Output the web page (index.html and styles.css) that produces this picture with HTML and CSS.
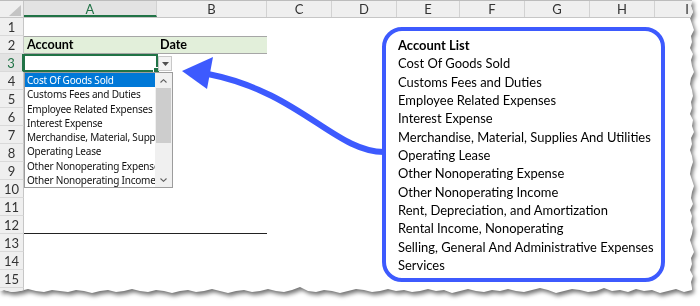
FILE: index.html
```html
<!DOCTYPE html>
<html>
<head>
<meta charset="utf-8">
<link rel="stylesheet" href="styles.css">
</head>
<body>
<div class="frame">
  <div class="sheet">
    <div class="colheads">
      <div class="corner"><svg width="24" height="17" viewBox="0 0 24 17"><polygon points="9,15 21,15 21,4" fill="#c4c4c4"/></svg></div>
      <div class="ch w-a ch-sel">A</div>
      <div class="ch w-b">B</div>
      <div class="ch w-c">C</div>
      <div class="ch w-c">D</div>
      <div class="ch w-e">E</div>
      <div class="ch w-c">F</div>
      <div class="ch w-c">G</div>
      <div class="ch w-c">H</div>
      <div class="ch w-c">I</div>
    </div>
    <div class="row"><div class="rh">1</div></div>
    <div class="row"><div class="rh">2</div><div class="cell w-a band">Account</div><div class="cell w-b band">Date</div></div>
    <div class="row"><div class="rh rh-sel">3</div><div class="cell w-a selcell"><span class="handle"></span></div><div class="cell w-b"><span class="ddbtn"><svg width="7" height="4" viewBox="0 0 7 4"><polygon points="0,0 7,0 3.5,4" fill="#505050"/></svg></span></div></div>
    <div class="row"><div class="rh">4</div></div>
    <div class="row"><div class="rh">5</div></div>
    <div class="row"><div class="rh">6</div></div>
    <div class="row"><div class="rh">7</div></div>
    <div class="row"><div class="rh">8</div></div>
    <div class="row"><div class="rh">9</div></div>
    <div class="row"><div class="rh">10</div></div>
    <div class="row"><div class="rh">11</div></div>
    <div class="row"><div class="rh">12</div><div class="cell w-a under"></div><div class="cell w-b under"></div></div>
    <div class="row"><div class="rh">13</div></div>
    <div class="row"><div class="rh">14</div></div>
    <div class="row"><div class="rh">15</div></div>
    <div class="row"><div class="rh">16</div></div>

    <div class="dropdown">
      <div class="items">
        <div class="item item-sel">Cost Of Goods Sold</div>
        <div class="item">Customs Fees and Duties</div>
        <div class="item">Employee Related Expenses</div>
        <div class="item">Interest Expense</div>
        <div class="item">Merchandise, Material, Supplies And Utilities</div>
        <div class="item">Operating Lease</div>
        <div class="item">Other Nonoperating Expense</div>
        <div class="item">Other Nonoperating Income</div>
      </div>
      <div class="sb">
        <div class="sb-btn"><svg width="7" height="4" viewBox="0 0 7 4"><polyline points="0.5,3.5 3.5,0.7 6.5,3.5" fill="none" stroke="#606060" stroke-width="1.1"/></svg></div>
        <div class="sb-thumb"></div>
        <div class="sb-track"></div>
        <div class="sb-btn"><svg width="7" height="4" viewBox="0 0 7 4"><polyline points="0.5,0.5 3.5,3.3 6.5,0.5" fill="none" stroke="#606060" stroke-width="1.1"/></svg></div>
      </div>
    </div>

    <div class="note">
      <div class="note-title">Account List</div>
      <div>Cost Of Goods Sold</div>
      <div>Customs Fees and Duties</div>
      <div>Employee Related Expenses</div>
      <div>Interest Expense</div>
      <div>Merchandise, Material, Supplies And Utilities</div>
      <div>Operating Lease</div>
      <div>Other Nonoperating Expense</div>
      <div>Other Nonoperating Income</div>
      <div>Rent, Depreciation, and Amortization</div>
      <div>Rental Income, Nonoperating</div>
      <div>Selling, General And Administrative Expenses</div>
      <div>Services</div>
    </div>

    <svg class="arrow" width="700" height="306" viewBox="0 0 700 306">
      <path d="M 384 152 C 335 152, 300 92, 208 74" fill="none" stroke="#3d5afe" stroke-width="6"/>
      <polygon points="182,71 213,57 207,89" fill="#3d5afe"/>
    </svg>
  </div>
</div>
</body>
</html>
```
FILE: styles.css
```css
html, body {
  margin: 0;
  padding: 0;
  background: #ffffff;
}
body {
  width: 700px;
  height: 306px;
  overflow: hidden;
  font-family: "Lato", "Liberation Sans", sans-serif;
}
.frame {
  width: 700px;
  height: 306px;
  filter: drop-shadow(2px 3px 2px rgba(0, 0, 0, 0.55));
}
.sheet {
  position: relative;
  width: 700px;
  height: 306px;
  background: #ffffff;
  clip-path: polygon(0 0, 692px 0, 691px 6px, 693px 12px, 690px 18px, 692px 24px, 694px 30px, 691px 36px, 692px 42px, 690px 48px, 693px 54px, 691px 60px, 692px 66px, 694px 72px, 691px 78px, 690px 84px, 692px 90px, 693px 96px, 691px 102px, 692px 108px, 690px 114px, 693px 120px, 692px 126px, 694px 132px, 691px 138px, 692px 144px, 690px 150px, 692px 156px, 693px 162px, 691px 168px, 690px 174px, 692px 180px, 694px 186px, 692px 192px, 691px 198px, 693px 204px, 690px 210px, 692px 216px, 691px 222px, 693px 228px, 692px 234px, 690px 240px, 692px 246px, 694px 252px, 691px 258px, 692px 264px, 690px 270px, 693px 276px, 691px 282px, 692px 288px,
    692px 290px, 684px 292px, 676px 289px, 668px 291px, 660px 293px, 652px 290px, 644px 291px, 636px 289px, 628px 292px, 620px 290px, 612px 291px, 604px 288px, 596px 291px, 588px 292px, 580px 290px, 572px 289px, 564px 291px, 556px 293px, 548px 290px, 540px 288px, 532px 290px, 524px 292px, 516px 291px, 508px 289px, 500px 291px, 492px 290px, 484px 292px, 476px 291px, 468px 289px, 460px 291px, 452px 293px, 444px 290px, 436px 291px, 428px 289px, 420px 291px, 412px 292px, 404px 290px, 396px 291px, 388px 289px, 380px 291px, 372px 292px, 364px 290px, 356px 289px, 348px 291px, 340px 293px, 332px 291px, 324px 290px, 316px 292px, 308px 291px, 300px 287px, 292px 290px, 284px 292px, 276px 291px, 268px 289px, 260px 291px, 252px 292px, 244px 290px, 236px 291px, 228px 293px, 220px 291px, 212px 289px, 204px 291px, 196px 292px, 188px 290px, 180px 291px, 172px 293px, 164px 291px, 156px 290px, 148px 292px, 140px 291px, 132px 289px, 124px 291px, 116px 292px, 108px 290px, 100px 291px, 92px 293px, 84px 291px, 76px 290px, 68px 292px, 60px 291px, 52px 290px, 44px 292px, 36px 291px, 28px 289px, 20px 291px, 12px 292px, 4px 290px, 0 291px);
}

/* column headers */
.colheads {
  display: flex;
  height: 18px;
  box-sizing: border-box;
  background: #efefef;
  border-top: 1px solid #bcbcbc;
  border-bottom: 1px solid #c6c6c6;
}
.corner {
  width: 24px;
  flex: none;
  box-sizing: border-box;
  border-right: 1px solid #c6c6c6;
  line-height: 0;
}
.ch {
  flex: none;
  box-sizing: border-box;
  border-right: 1px solid #d2d2d2;
  text-align: center;
  font-size: 13px;
  line-height: 16px;
  color: #333;
}
.ch-sel {
  color: #217346;
  background: #e3e3e3;
  border-bottom: 2px solid #217346;
}
.w-a { width: 133px; }
.w-b { width: 110px; }
.w-c { width: 65px; }
.w-e { width: 63px; }

/* rows */
.row {
  display: flex;
  height: 18px;
}
.rh {
  width: 24px;
  flex: none;
  box-sizing: border-box;
  background: #efefef;
  border-right: 1px solid #c6c6c6;
  border-bottom: 1px solid #d9d9d9;
  text-align: center;
  font-size: 13px;
  line-height: 18px;
  color: #333;
}
.rh-sel {
  color: #217346;
  background: #e3e3e3;
  border-right: 2px solid #217346;
}
.cell {
  flex: none;
  box-sizing: border-box;
  height: 18px;
  position: relative;
}
.band {
  background: #e2efda;
  border-top: 1px solid #a6a6a6;
  border-bottom: 1px solid #a6a6a6;
  font-weight: bold;
  font-size: 12.6px;
  line-height: 16px;
  padding-left: 3px;
  color: #000;
}
.selcell {
  border: 2px solid #217346;
  margin-left: -1px;
  width: 135px;
}
.handle {
  position: absolute;
  right: -4px;
  bottom: -4px;
  width: 5px;
  height: 5px;
  background: #217346;
  border: 1px solid #fff;
}
.ddbtn {
  display: flex;
  align-items: center;
  justify-content: center;
  width: 14px;
  height: 15px;
  margin: 2px 0 0 0;
  box-sizing: border-box;
  background: #f3f3f3;
  border: 1px solid #c8c8c8;
}
.under {
  border-bottom: 1px solid #222;
}

/* dropdown list overlay */
.dropdown {
  position: absolute;
  left: 24px;
  top: 72px;
  width: 149px;
  height: 116px;
  box-sizing: border-box;
  border: 1px solid #9c9c9c;
  background: #fff;
  display: flex;
}
.items {
  flex: 1;
  overflow: hidden;
}
.item {
  height: 14.25px;
  line-height: 14px;
  font-family: "Noto Sans", "Open Sans", sans-serif;
  font-size: 10px;
  letter-spacing: -0.2px;
  white-space: nowrap;
  padding-left: 2px;
  color: #111;
}
.item-sel {
  background: #0078d7;
  color: #fff;
}
.sb {
  width: 17px;
  flex: none;
  display: flex;
  flex-direction: column;
  background: #f0f0f0;
}
.sb-btn {
  height: 15px;
  display: flex;
  align-items: center;
  justify-content: center;
  flex: none;
}
.sb-thumb {
  height: 55px;
  background: #cdcdcd;
  flex: none;
  margin: 0 1px;
}
.sb-track {
  flex: 1;
}

/* note box */
.note {
  position: absolute;
  left: 382px;
  top: 27px;
  width: 283px;
  height: 255px;
  box-sizing: border-box;
  border: 4px solid #3d5afe;
  border-radius: 20px;
  padding: 5px 0 0 12px;
  font-size: 12.95px;
  line-height: 18.33px;
  color: #000;
  white-space: nowrap;
}
.note-title {
  font-weight: bold;
}

.arrow {
  position: absolute;
  left: 0;
  top: 0;
  pointer-events: none;
}
```
